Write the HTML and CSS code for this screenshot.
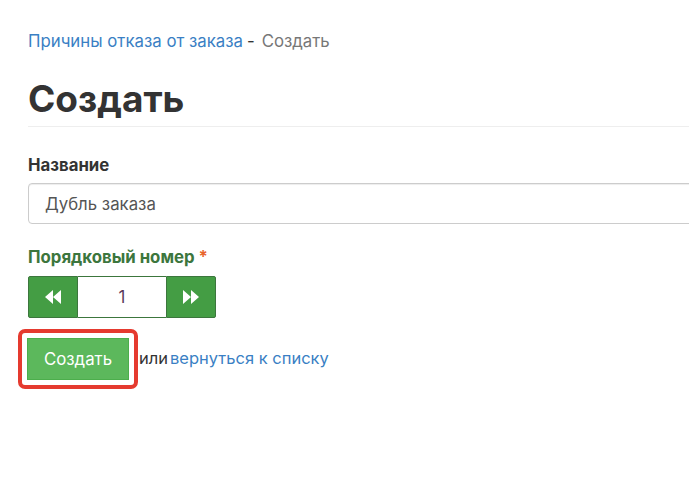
FILE: index.html
```html
<!DOCTYPE html>
<html lang="ru">
<head>
<meta charset="utf-8">
<title>Создать</title>
<link rel="stylesheet" href="styles.css">
</head>
<body>
<div class="page">
  <nav class="crumbs"><a href="#" class="link">Причины отказа от заказа</a><span class="sep">-</span><span class="current">Создать</span></nav>
  <h1 class="title">Создать</h1>
  <form class="form">
    <div class="field">
      <label class="label">Название</label>
      <input class="input" type="text" value="Дубль заказа">
    </div>
    <div class="field field-last">
      <label class="label label-success">Порядковый номер <span class="req">*</span></label>
      <div class="stepper">
        <button type="button" class="step-btn" aria-label="Меньше">
          <svg width="18" height="16" viewBox="0 0 18 16"><path d="M9 1 L1 8 L9 15 Z M17 1 L9 8 L17 15 Z" fill="#fff"/></svg>
        </button>
        <input class="step-input" type="text" value="1">
        <button type="button" class="step-btn" aria-label="Больше">
          <svg width="18" height="16" viewBox="0 0 18 16"><path d="M1 1 L9 8 L1 15 Z M9 1 L17 8 L9 15 Z" fill="#fff"/></svg>
        </button>
      </div>
    </div>
    <div class="actions">
      <span class="focus-ring"><button type="submit" class="btn-create">Создать</button></span>
      <span class="or">или</span><a href="#" class="link back">вернуться к списку</a>
    </div>
  </form>
</div>
</body>
</html>
```
FILE: styles.css
```css
html, body {
  margin: 0;
  padding: 0;
  background: #fff;
  overflow: hidden;
}
body {
  font-family: "Inter", "Liberation Sans", sans-serif;
  font-size: 16.8px;
  color: #333;
}
.page {
  width: 700px;
  padding: 29px 0 0 28px;
}
.crumbs {
  line-height: 24px;
  height: 24px;
}
.link {
  color: #3a7fc4;
  text-decoration: none;
}
.sep {
  margin: 0 7px 0 4px;
  color: #333;
}
.current {
  color: #777;
}
.title {
  margin: 23px 0 0 0;
  font-size: 37px;
  line-height: 46px;
  font-weight: 700;
  color: #333;
  padding-bottom: 4px;
  border-bottom: 1px solid #eee;
}
.form {
  margin-top: 27px;
}
.field {
  margin-bottom: 22px;
}
.field-last {
  margin-bottom: 0;
}
.label {
  display: block;
  font-weight: 700;
  line-height: 22px;
  margin-bottom: 7px;
}
.label-success {
  color: #3c763d;
  margin-bottom: 8px;
}
.req {
  color: #e8642c;
}
.input {
  display: block;
  box-sizing: border-box;
  width: 100%;
  height: 41px;
  padding: 6px 16px;
  border: 1px solid #ccc;
  border-radius: 4px;
  font: inherit;
  color: #555;
  box-shadow: inset 0 1px 1px rgba(0,0,0,0.075);
}
.stepper {
  display: flex;
  height: 42px;
}
.step-btn {
  width: 50px;
  height: 42px;
  box-sizing: border-box;
  background: #449d44;
  border: 1px solid #3c763d;
  display: flex;
  align-items: center;
  justify-content: center;
  padding: 0;
}
.step-btn:first-child {
  border-radius: 2px 0 0 2px;
}
.step-btn:last-child {
  border-radius: 0 2px 2px 0;
}
.step-input {
  width: 88px;
  height: 42px;
  box-sizing: border-box;
  border: 1px solid #3c763d;
  border-left: 0;
  border-right: 0;
  text-align: center;
  font: inherit;
  color: #5a3b5a;
  padding: 0;
}
.actions {
  display: flex;
  align-items: center;
  margin-top: 11px;
  font-size: 16.5px;
  line-height: 20px;
}
.focus-ring {
  display: inline-block;
  margin-left: -10px;
  padding: 5px;
  border: 4px solid #e53a2f;
  border-radius: 7px;
}
.btn-create {
  display: block;
  width: 102px;
  height: 42px;
  background: #5cb85c;
  border: 1px solid #4cae4c;
  color: #fff;
  font: inherit;
  font-size: 16.8px;
  border-radius: 0;
  padding: 0;
}
.or {
  margin-left: 1px;
  margin-bottom: 2px;
  color: #333;
}
.back {
  margin-left: 2px;
  margin-bottom: 2px;
}
```
